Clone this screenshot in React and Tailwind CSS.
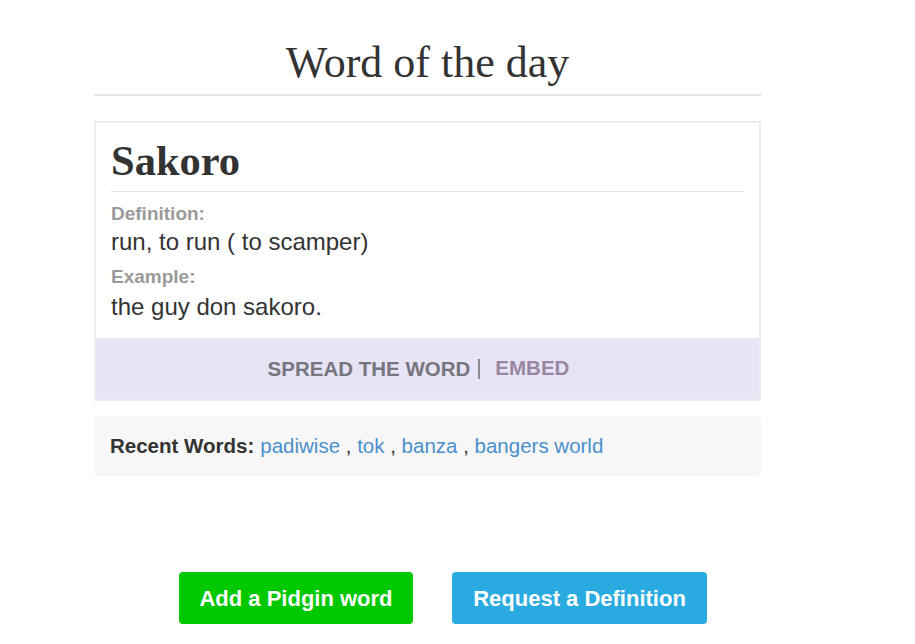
import React from "react";

const recent = ["padiwise", "tok", "banza", "bangers world"];

export default function App() {
  return (
    <div className="min-h-[644px] bg-white font-['Liberation_Sans',Arial,sans-serif] text-[#333]">
      <div className="ml-[94px] w-[667px] pt-[40px]">
        <h1 className="border-b-2 border-[#e6e6e6] pb-[8px] text-center font-['Liberation_Serif',serif] text-[44px] leading-[46px] text-[#333]">
          Word of the day
        </h1>

        <div className="mt-[25px] border-2 border-[#ededed]">
          <div className="px-[15px] pt-[15px] pb-[17px]">
            <h2 className="border-b border-[#e8e8e8] pb-[7px] font-['Liberation_Serif',serif] text-[42.5px] font-bold leading-[46px] text-[#333]">
              Sakoro
            </h2>
            <div className="mt-[11px] text-[19px] font-bold leading-[22px] text-[#9a9a9a]">Definition:</div>
            <div className="mt-[3px] text-[24px] leading-[28px]">run, to run ( to scamper)</div>
            <div className="mt-[10px] text-[19px] font-bold leading-[22px] text-[#9a9a9a]">Example:</div>
            <div className="mt-[5px] text-[24px] leading-[28px]">the guy don sakoro.</div>
          </div>
          <div className="flex h-[61px] items-center justify-center bg-[#e6e4f5] pr-[18px] text-[20.5px] font-bold">
            <span className="border-r-2 border-[#8a8a8f] pr-[8px] leading-[20px] text-[#77767f]">SPREAD THE WORD</span>
            <span className="pl-[15px] text-[#9a86a3]">EMBED</span>
          </div>
        </div>

        <div className="mt-[15px] flex h-[60px] items-center rounded bg-[#f7f7f7] px-[16px] text-[20.5px]">
          <span className="font-bold text-[#333]">Recent Words:</span>
          <span className="ml-[6px]">
            {recent.map((w, i) => (
              <React.Fragment key={w}>
                <a href="#" className="text-[#4a8fcb]">{w}</a>
                {i < recent.length - 1 && <span className="text-[#333]"> , </span>}
              </React.Fragment>
            ))}
          </span>
        </div>
      </div>

      <div className="mt-[96px] flex gap-[39px] pl-[179px]">
        <button className="h-[52px] w-[234px] rounded bg-[#00c800] text-[22px] font-bold text-white">
          Add a Pidgin word
        </button>
        <button className="h-[52px] w-[255px] rounded bg-[#29abe2] text-[22px] font-bold text-white">
          Request a Definition
        </button>
      </div>
    </div>
  );
}
